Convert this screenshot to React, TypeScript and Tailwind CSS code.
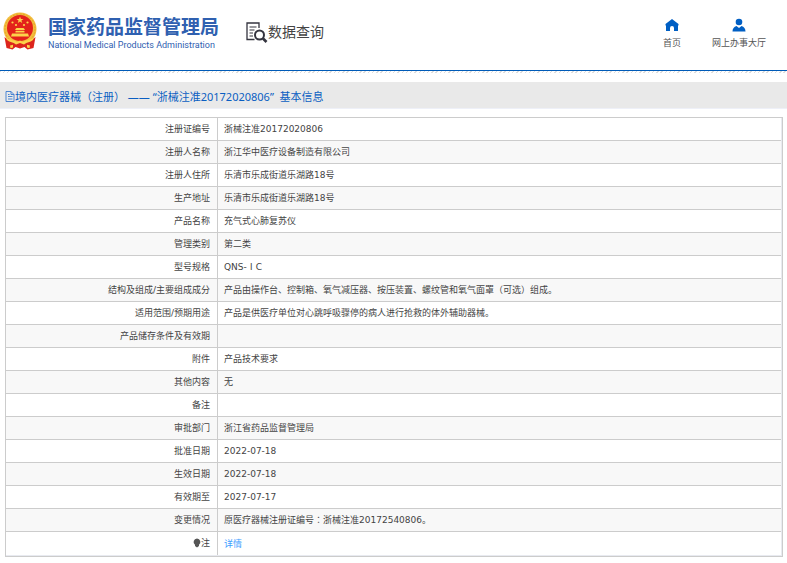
import React from "react";

type Row = { label: string; value: string; kind?: "link" };

const rows: Row[] = [
  { label: "注册证编号", value: "浙械注准20172020806" },
  { label: "注册人名称", value: "浙江华中医疗设备制造有限公司" },
  { label: "注册人住所", value: "乐清市乐成街道乐湖路18号" },
  { label: "生产地址", value: "乐清市乐成街道乐湖路18号" },
  { label: "产品名称", value: "充气式心肺复苏仪" },
  { label: "管理类别", value: "第二类" },
  { label: "型号规格", value: "QNS-ⅠC" },
  { label: "结构及组成/主要组成成分", value: "产品由操作台、控制箱、氧气减压器、按压装置、螺纹管和氧气面罩（可选）组成。" },
  { label: "适用范围/预期用途", value: "产品是供医疗单位对心跳呼吸骤停的病人进行抢救的体外辅助器械。" },
  { label: "产品储存条件及有效期", value: "" },
  { label: "附件", value: "产品技术要求" },
  { label: "其他内容", value: "无" },
  { label: "备注", value: "" },
  { label: "审批部门", value: "浙江省药品监督管理局" },
  { label: "批准日期", value: "2022-07-18" },
  { label: "生效日期", value: "2022-07-18" },
  { label: "有效期至", value: "2027-07-17" },
  { label: "变更情况", value: "原医疗器械注册证编号：浙械注准20172540806。" },
  { label: "注", value: "详情", kind: "link" },
];

// Full-width brackets, colons and numerals sit in the middle of their cell in the TC face.
function CenteredSymbols({ text }: { text: string }) {
  return (
    <>
      {text.split(/([（）：Ⅰ])/).map((part, i) =>
        /^[（）：Ⅰ]$/.test(part) ? (
          <span key={i} lang="zh-TW" className="font-['Noto_Sans_CJK_TC',sans-serif]">
            {part}
          </span>
        ) : (
          part
        ),
      )}
    </>
  );
}

function Emblem() {
  return (
    <svg viewBox="0 0 34 38" className="h-[38px] w-[34px]" aria-hidden="true">
      <circle cx="17" cy="17" r="16.5" fill="#f3bd3c" />
      <circle cx="17" cy="17" r="15" fill="none" stroke="#e09a2a" strokeWidth=".8" strokeDasharray="2 1.5" />
      <circle cx="17" cy="16" r="13" fill="#e3211b" />
      <path d="M1.500 25c4 4 9 3 12 6l3.500-2 3.500 2c3-3 8-2 12-6l-2 11-6 1.500-3-2.500-4.500 1.500L12.500 35l-3 2.500-6-1.500z" fill="#dc241c" />
      <g fill="#fcd24a">
        <path d="M17 4.500l.9 2.400h2.600l-2.100 1.600.8 2.500-2.200-1.500-2.200 1.500.8-2.500-2.100-1.600h2.600z" />
        <circle cx="9.500" cy="10.500" r="1.100" />
        <circle cx="24.500" cy="10.500" r="1.100" />
        <circle cx="13" cy="13" r="1.100" />
        <circle cx="21" cy="13" r="1.100" />
        <path d="M12 17.500l1.500-1.500h7l1.500 1.500-1 .8h-8zM12.500 19h9v1.500h-9zM9 21.500h16l1 3H8z" />
        <path d="M3 25.500c4 3 8 2 11 4.500l3-1.500 3 1.500c3-2.500 7-1.500 11-4.500l-1 2.500c-3 2.500-6 2-9 4.500l-4-1.500-4 1.500c-3-2.500-6-2-9-4.500z" />
        <path d="M7 33.500l3-.8v2.800l-2.500.8zM27 33.500l-3-.8v2.800l2.500.8z" />
      </g>
    </svg>
  );
}

function SearchDocument() {
  return (
    <svg viewBox="0 0 22 22" className="h-[22px] w-[22px]" fill="none" stroke="#34343f" aria-hidden="true">
      <path d="M13 6V1H1v16.500h7.500" strokeWidth="1.300" />
      <path d="M3.500 5h7M3.500 8h5M3.500 11h3.500M3.500 14h3.500" strokeWidth="1.200" />
      <circle cx="13.500" cy="13" r="4.500" strokeWidth="2" />
      <path d="M17 16.500l3.500 3.500" strokeWidth="2.600" />
    </svg>
  );
}

function House() {
  return (
    <svg viewBox="0 0 14 14" className="h-[14px] w-[14px]" fill="#005fc4" aria-hidden="true">
      <path d="M7 1l6.500 5v1.500H13V13H9V10a2 2 0 0 0-4 0v3H1V7.500H.5V6z" />
    </svg>
  );
}

function Person() {
  return (
    <svg viewBox="0 0 14 14" className="h-[14px] w-[14px]" fill="#005fc4" aria-hidden="true">
      <circle cx="7" cy="4" r="3.300" />
      <path d="M.5 13.500c0-3 1.500-4.500 4-5.500L7 10l2.500-2c2.500 1 4 2.500 4 5.500z" />
    </svg>
  );
}

function Note() {
  return (
    <svg viewBox="0 0 10 11" className="h-[11px] w-[10px]" fill="none" stroke="#3a7bd0" aria-hidden="true">
      <path d="M1 .5h5l3 3v7H1zM6 .5v3h3M3 3.500h1.500M3 5.500h4.500M3 8h4.500" strokeWidth=".9" />
    </svg>
  );
}

function Bulb() {
  return (
    <svg viewBox="0 0 8 10" className="h-[10px] w-2" fill="#555" aria-hidden="true">
      <path d="M4 .5a3.500 3.500 0 0 1 2 6.300V8L4 9.500 2 8V6.800A3.500 3.500 0 0 1 4 .5z" />
    </svg>
  );
}

export default function App() {
  return (
    <div className="bg-white pb-1 font-['Noto_Sans','Noto_Sans_CJK_SC',sans-serif] text-[9px] text-[#444]">
      <header className="flex h-[71px] items-start justify-between border-b border-[#005bb8] pr-[21px] pl-[3px]">
        <div className="flex items-start">
          <div className="mt-3 mr-[11px]">
            <Emblem />
          </div>
          <div className="mt-[15px] text-[#2f60b0]">
            <h1 className="font-['Noto_Sans_CJK_SC',sans-serif] text-[19px] leading-[22px] font-bold">国家药品监督管理局</h1>
            <p className="font-[Roboto,sans-serif] text-[9px] leading-4">National Medical Products Administration</p>
          </div>
          <div className="mt-[22px] ml-[27px] flex items-start text-[#444]">
            <SearchDocument />
            <span className="font-['Noto_Sans_CJK_SC',sans-serif] text-[14px] leading-[18px]">数据查询</span>
          </div>
        </div>
        <nav className="mt-[18px] flex gap-[31px] leading-[14px] text-[#555]">
          <a href="#home" className="flex flex-col items-center gap-1">
            <House />
            首页
          </a>
          <a href="#hall" className="flex flex-col items-center gap-1">
            <Person />
            网上办事大厅
          </a>
        </nav>
      </header>
      <div className="h-[2px] bg-[repeating-linear-gradient(135deg,#ddd_0px,#ddd_1px,#fff_1px,#fff_3px)]" />
      <h2 className="mt-[9px] flex h-[27px] items-center border-b border-[#eef0f8] bg-[#e9e9e9] pt-0.5 pl-[5px] text-[11px] text-[#0a5ec2]">
        <Note />
        <span className="leading-[18px] whitespace-pre">
          <CenteredSymbols text="境内医疗器械（注册） —— “浙械注准20172020806”  基本信息" />
        </span>
      </h2>
      <div className="mt-2 mr-1 ml-[5px] border border-[#ccc] bg-[#e8eaf0] pr-px pb-px">
        <table className="w-full border-separate border-spacing-0 bg-white font-['DejaVu_Sans','Noto_Sans_CJK_SC',sans-serif] leading-[14px]">
          <tbody>
            {rows.map((row) => (
              <tr key={row.label} className="group h-[23px] even:bg-[#f8f8f8]">
                <th
                  scope="row"
                  className="w-[212px] border-r border-b border-[#ccc] py-0 pr-[7px] pl-0 text-right font-normal group-last:border-b-0"
                >
                  {row.kind === "link" ? (
                    <span className="inline-flex items-center">
                      <Bulb />
                      {row.label}
                    </span>
                  ) : (
                    row.label
                  )}
                </th>
                <td className="border-b border-[#ccc] py-0 pr-0 pl-[6px] group-last:border-b-0">
                  {row.kind === "link" ? (
                    <a href="#detail" className="text-[#409eff]">
                      {row.value}
                    </a>
                  ) : (
                    <CenteredSymbols text={row.value} />
                  )}
                </td>
              </tr>
            ))}
          </tbody>
        </table>
      </div>
    </div>
  );
}
